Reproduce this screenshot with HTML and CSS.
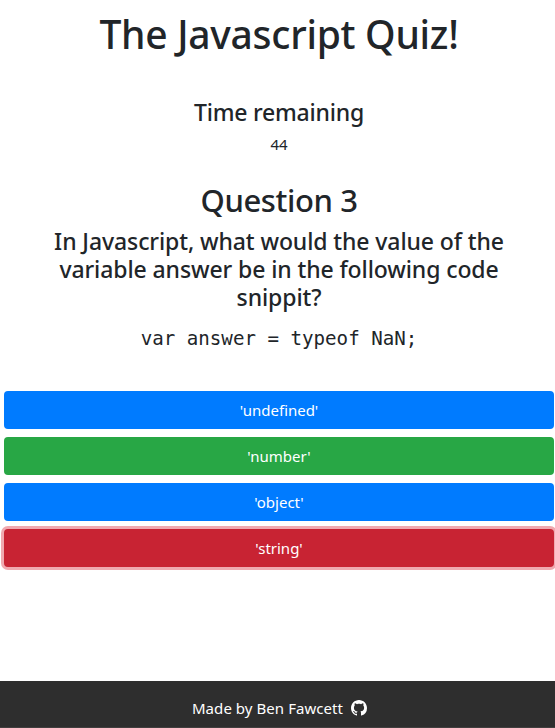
FILE: index.html
```html
<!DOCTYPE html>
<html lang="en">
<head>
<meta charset="utf-8">
<title>The Javascript Quiz!</title>
<link rel="stylesheet" href="styles.css">
</head>
<body>
<main>
  <h1>The Javascript Quiz!</h1>
  <section class="timer">
    <h2 class="timer-title">Time remaining</h2>
    <p>44</p>
  </section>
  <section class="question">
    <h2>Question 3</h2>
    <h3>In Javascript, what would the value of the<br>variable answer be in the following code<br>snippit?</h3>
    <code>var answer = typeof NaN;</code>
  </section>
  <div class="answers">
    <button class="btn">'undefined'</button>
    <button class="btn correct">'number'</button>
    <button class="btn">'object'</button>
    <button class="btn wrong">'string'</button>
  </div>
</main>
<footer>
  <span>Made by Ben Fawcett</span>
  <svg class="github" viewBox="0 0 16 16" aria-label="GitHub"><path fill="currentColor" d="M8 0C3.58 0 0 3.58 0 8c0 3.54 2.29 6.53 5.47 7.59.4.07.55-.17.55-.38 0-.19-.01-.82-.01-1.49-2.01.37-2.53-.49-2.69-.94-.09-.23-.48-.94-.82-1.13-.28-.15-.68-.52-.01-.53.63-.01 1.08.58 1.23.82.72 1.21 1.87.87 2.33.66.07-.52.28-.87.51-1.07-1.78-.2-3.64-.89-3.64-3.95 0-.87.31-1.59.82-2.15-.08-.2-.36-1.02.08-2.12 0 0 .67-.21 2.2.82.64-.18 1.32-.27 2-.27s1.36.09 2 .27c1.53-1.04 2.2-.82 2.2-.82.44 1.1.16 1.92.08 2.12.51.56.82 1.27.82 2.15 0 3.07-1.87 3.75-3.65 3.95.29.25.54.73.54 1.48 0 1.07-.01 1.93-.01 2.2 0 .21.15.46.55.38A8.01 8.01 0 0 0 16 8c0-4.42-3.58-8-8-8z"/></svg>
</footer>
</body>
</html>
```
FILE: styles.css
```css
* { box-sizing: border-box; }
body {
  margin: 0;
  min-height: 728px;
  display: flex;
  flex-direction: column;
  overflow: hidden;
  background: #fff;
  color: #212529;
  font: 400 16px/24px "Noto Sans", "Open Sans", sans-serif;
}
main { flex: 1; padding: 10px 1px 0 4px; text-align: center; }
h1, h2, h3, p { margin: 0; font-weight: 500; white-space: nowrap; }
h1 { font-size: 39px; line-height: 48px; letter-spacing: -.27px; }
.timer { padding-top: 40px; }
.timer-title { font-size: 23px; line-height: 28px; letter-spacing: -.22px; }
.timer p { margin-top: 6px; font-size: 15px; font-weight: 400; letter-spacing: 0; }
.question { padding-top: 25px; }
.question h2 { font-size: 31px; line-height: 38px; letter-spacing: -.4px; }
.question h3 { margin-top: 8px; font-size: 23px; line-height: 28px; letter-spacing: -.1px; }
.question code { display: block; margin-top: 13px; font: 19.15px/30px "DejaVu Sans Mono", monospace; }
.answers { display: flex; flex-direction: column; gap: 8px; padding-top: 37px; }
.btn {
  height: 38px;
  padding: 0;
  border: 0;
  border-radius: 4px;
  background: #007bff;
  color: #fff;
  font: 400 15px/24px "Noto Sans", "Open Sans", sans-serif;
}
.correct { background: #28a745; }
.wrong { background: #c82333; box-shadow: 0 0 0 3px #f0a9b0; }
footer {
  display: flex;
  justify-content: center;
  align-items: center;
  gap: 8px;
  height: 47px;
  padding: 8px 0 0 4px;
  background: #2e2e2e;
  border-bottom: 1px solid #423f3f;
  color: #fff;
  font-size: 15px;
  letter-spacing: .06px;
}
.github { width: 16px; height: 16px; }
```
